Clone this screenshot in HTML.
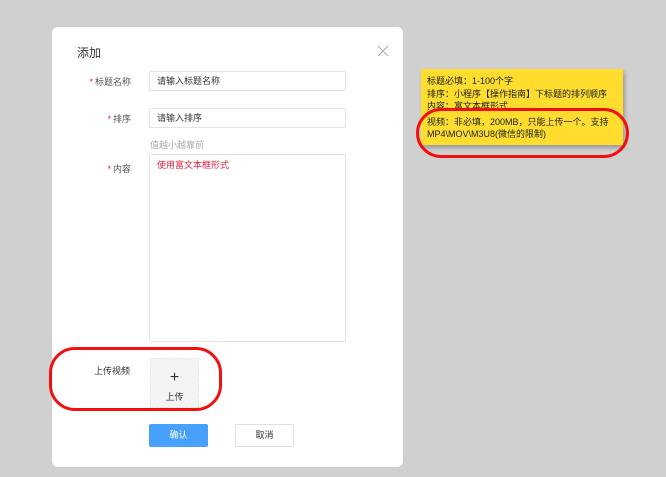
<!DOCTYPE html>
<html><head><meta charset="utf-8"><style>
*{box-sizing:border-box;margin:0;padding:0}
body{width:666px;height:477px;background:#d0d0d0;position:relative;overflow:hidden;font-family:"Liberation Sans","Noto Sans CJK SC",sans-serif;font-size:9px;color:#333}
.a{position:absolute}
.dlg{left:52px;top:27px;width:351px;height:440px;background:#fff;border-radius:6px}
.inp{position:absolute;border:1px solid #e4e4e4;border-radius:2px;background:#fff;padding-left:7px;line-height:18px}
.lbl{position:absolute;width:80px;text-align:right;color:#555}
.lbl b{color:#e0203a;font-weight:normal;margin-right:2px}
</style></head><body>
<div class="a dlg"></div>
<div class="a" style="left:77px;top:44px;font-size:12px;color:#333">添加</div>
<svg class="a" style="left:377px;top:45px" width="12" height="12"><path d="M1 1L11 11M11 1L1 11" stroke="#aaa" stroke-width="1"/></svg>
<div class="lbl" style="left:51px;top:75px"><b>*</b>标题名称</div>
<div class="inp" style="left:149px;top:71px;width:197px;height:20px">请输入标题名称</div>
<div class="lbl" style="left:51px;top:112px"><b>*</b>排序</div>
<div class="inp" style="left:149px;top:108px;width:197px;height:20px">请输入排序</div>
<div class="a" style="left:150px;top:138px;color:#aaa">值越小越靠前</div>
<div class="lbl" style="left:51px;top:162px"><b>*</b>内容</div>
<div class="inp" style="left:149px;top:154px;width:197px;height:188px;line-height:20px;color:#e0203a">使用富文本框形式</div>
<div class="a" style="left:94px;top:364px;color:#333">上传视频</div>
<div class="a" style="left:150px;top:358px;width:49px;height:50px;background:#f3f3f3;border:1px dashed #e8e8e8;text-align:center">
<div style="font-size:16px;line-height:16px;margin-top:11px;color:#333">+</div><div style="margin-top:4px">上传</div></div>
<div class="a" style="left:149px;top:424px;width:59px;height:23px;background:#46a0fc;color:#fff;text-align:center;line-height:23px;border-radius:2px">确认</div>
<div class="a" style="left:235px;top:424px;width:59px;height:23px;border:1px solid #e0e0e0;text-align:center;line-height:21px;border-radius:2px">取消</div>
<div class="a" style="left:49px;top:347px;width:173px;height:64px;border:3px solid #f01010;border-radius:26px"></div>
<div class="a" style="left:421px;top:69px;width:202px;height:76px;background:#fedd2e;box-shadow:2px 3px 4px rgba(0,0,0,.25);padding:6px 0 0 6px;line-height:12.5px;font-size:9px;color:#222">标题必填：1-100个字<br>排序：小程序【操作指南】下标题的排列顺序<br>内容：富文本框形式<div style="margin-top:3px">视频：非必填，200MB，只能上传一个。支持<br>MP4\MOV\M3U8(微信的限制)</div></div>
<div class="a" style="left:416px;top:108px;width:213px;height:50px;border:3px solid #f01010;border-radius:25px"></div>
</body></html>
